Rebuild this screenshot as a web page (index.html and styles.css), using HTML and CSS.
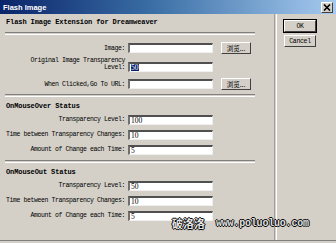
FILE: index.html
```html
<!DOCTYPE html>
<html lang="en">
<head>
  <meta charset="UTF-8" />
  <title>Flash Image</title>
  <link rel="stylesheet" href="styles.css">
</head>
<body>
  <div class="window">
    <!-- Pasek tytułu -->
    <div class="titlebar">
      <span class="title">Flash Image</span>
      <span class="close">
        <svg width="8" height="7" viewBox="0 0 8 7"><path d="M1 0.5 L7 6.5 M7 0.5 L1 6.5" stroke="#000" stroke-width="1.6"/></svg>
      </span>
    </div>

    <div class="body">
      <div class="main">
        <div class="heading first">Flash Image Extension for Dreamweaver</div>
        <div class="sep"></div>

        <div class="row">
          <div class="label">Image:</div>
          <div class="field"></div>
          <div class="browse">浏览...</div>
        </div>
        <div class="row tall">
          <div class="label two">Original Image Transparency<br>Level:</div>
          <div class="field"><span class="selected">50</span></div>
        </div>
        <div class="row">
          <div class="label">When Clicked,Go To URL:</div>
          <div class="field"></div>
          <div class="browse">浏览...</div>
        </div>
        <div class="sep"></div>

        <div class="heading">OnMouseOver Status</div>
        <div class="row even">
          <div class="label">Transparency Level:</div>
          <div class="field"><span>100</span></div>
        </div>
        <div class="row even">
          <div class="label">Time between Transparency Changes:</div>
          <div class="field"><span>10</span></div>
        </div>
        <div class="row even">
          <div class="label">Amount of Change each Time:</div>
          <div class="field"><span>5</span></div>
        </div>
        <div class="sep"></div>

        <div class="heading">OnMouseOut Status</div>
        <div class="row even">
          <div class="label">Transparency Level:</div>
          <div class="field"><span>50</span></div>
        </div>
        <div class="row even">
          <div class="label">Time between Transparency Changes:</div>
          <div class="field"><span>10</span></div>
        </div>
        <div class="row even">
          <div class="label">Amount of Change each Time:</div>
          <div class="field"><span>5</span></div>
        </div>
      </div>

      <div class="divider"></div>

      <div class="side">
        <div class="btn default">OK</div>
        <div class="btn">Cancel</div>
      </div>
    </div>

    <!-- Znak wodny -->
    <div class="watermark">
      <span class="wm-cn">破洛洛</span>
      <span class="wm-url">www.poluoluo.com</span>
    </div>
  </div>
</body>
</html>
```

FILE: styles.css
```css
body {
  margin: 0;
  background-color: #d4d0c8;
}

.window {
  position: relative;
  width: 336px;
  height: 243px;
  background-color: #d4d0c8;
  overflow: hidden;
  font-family: "Liberation Mono", monospace;
  color: #000;
}

.titlebar {
  height: 14px;
  display: flex;
  align-items: center;
  justify-content: space-between;
  padding: 0 3px;
  background: linear-gradient(to right, #0a246a 0%, #3a6ea5 45%, #a6caf0 100%);
}

.title {
  font-family: "Liberation Sans", Arial, sans-serif;
  font-weight: bold;
  font-size: 7.5px;
  color: #fff;
}

.close {
  width: 10px;
  height: 9px;
  display: flex;
  align-items: center;
  justify-content: center;
  background-color: #d4d0c8;
  border-top: 1px solid #fff;
  border-left: 1px solid #fff;
  border-right: 1px solid #404040;
  border-bottom: 1px solid #404040;
}

.body {
  display: flex;
  height: 226px;
  border-bottom: 1px solid #808080;
}

.main {
  width: 263px;
  padding: 4px 0 0 5px;
}

.heading {
  font-weight: bold;
  font-size: 7px;
  letter-spacing: -0.1px;
  line-height: 8px;
  height: 8px;
  margin-top: 5px;
  padding-left: 1px;
}

.heading.first {
  margin-top: 0;
}

.sep {
  width: 250px;
  height: 1px;
  margin-top: 3px;
  border-top: 1px solid #808080;
  border-bottom: 1px solid #fff;
}

.heading.first + .sep {
  margin-top: 6px;
}

.row {
  display: flex;
  align-items: center;
  height: 14px;
  font-size: 6.5px;
  letter-spacing: -0.4px;
}

.sep + .row {
  margin-top: 6px;
}

.row.tall {
  height: 20px;
  margin-top: 2px;
}

.row.even {
  height: 15px;
}

.heading + .row {
  margin-top: 2px;
}

.label {
  width: 120px;
  margin-right: 3px;
  text-align: right;
  line-height: 7px;
  white-space: nowrap;
}

.label.two {
  align-self: flex-start;
  margin-top: 1px;
  line-height: 6.5px;
}

.field {
  width: 81px;
  height: 7px;
  background-color: #fff;
  border-top: 2px solid #505050;
  border-left: 2px solid #707070;
  border-right: 1px solid #eeeeee;
  border-bottom: 1px solid #f0f0f0;
  display: flex;
  align-items: center;
  padding-left: 1px;
  font-family: "Liberation Serif", serif;
  font-size: 7.5px;
  letter-spacing: 0;
}

.selected {
  background-color: #0a246a;
  color: #fff;
  line-height: 7px;
}

.browse {
  width: 28px;
  height: 10px;
  margin-left: 8px;
  display: flex;
  align-items: center;
  justify-content: center;
  font-family: "Noto Sans CJK SC", sans-serif;
  font-size: 6.5px;
  letter-spacing: 0;
  border-top: 1px solid #fff;
  border-left: 1px solid #fff;
  border-right: 1px solid #404040;
  border-bottom: 1px solid #404040;
}

.divider {
  width: 1px;
  margin-left: 6px;
  border-left: 1px solid #a0a0a0;
  border-right: 1px solid #fff;
}

.side {
  display: flex;
  flex-direction: column;
  gap: 3px;
  padding: 6px 0 0 7px;
}

.btn {
  width: 30px;
  height: 10px;
  display: flex;
  align-items: center;
  justify-content: center;
  font-size: 6.5px;
  letter-spacing: -0.3px;
  border-top: 1px solid #fff;
  border-left: 1px solid #fff;
  border-right: 1px solid #404040;
  border-bottom: 1px solid #404040;
}

.btn.default {
  outline: 1px solid #000;
}

.watermark {
  position: absolute;
  left: 172px;
  top: 215px;
  display: flex;
  align-items: center;
  gap: 11px;
  color: #e4e4e4;
  text-shadow: 1px 0 0 #000, -1px 0 0 #000, 0 1px 0 #000, 0 -1px 0 #000;
}

.wm-cn {
  font-family: "Noto Sans CJK SC", sans-serif;
  font-weight: bold;
  font-size: 11px;
}

.wm-url {
  font-family: "Liberation Mono", monospace;
  font-weight: bold;
  font-size: 10px;
  letter-spacing: -0.2px;
}
```
